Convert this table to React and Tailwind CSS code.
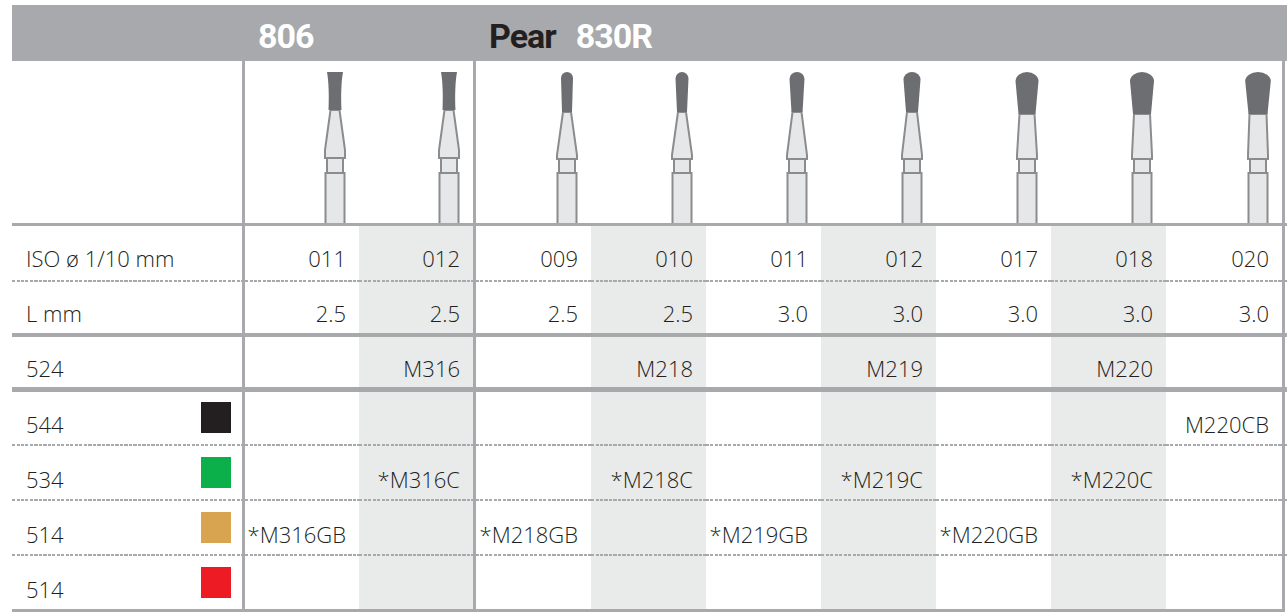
import React from "react";

const cols = [
  { w: "w-[117px]", vline: true, shade: false, bur: { t: "ic" }, iso: "011", l: "2.5", r514: "*M316GB" },
  { w: "w-[114px]", shade: true, bur: { t: "ic" }, iso: "012", l: "2.5", r524: "M316", r534: "*M316C" },
  { w: "w-[118px]", vline: true, bur: { t: "p", w: 6, ry: 6, b: 5, bot: 51 }, iso: "009", l: "2.5", r514: "*M218GB" },
  { w: "w-[115px]", shade: true, bur: { t: "p", w: 6.5, ry: 6.5, b: 5, bot: 51 }, iso: "010", l: "2.5", r524: "M218", r534: "*M218C" },
  { w: "w-[115px]", bur: { t: "p", w: 7.5, ry: 7, b: 5.5, bot: 51 }, iso: "011", l: "3.0", r514: "*M219GB" },
  { w: "w-[115px]", shade: true, bur: { t: "p", w: 8.5, ry: 7.5, b: 6, bot: 51 }, iso: "012", l: "3.0", r524: "M219", r534: "*M219C" },
  { w: "w-[115px]", bur: { t: "p", w: 11.5, ry: 9, b: 8.5, bot: 53 }, iso: "017", l: "3.0", r514: "*M220GB" },
  { w: "w-[115px]", shade: true, bur: { t: "p", w: 12, ry: 9, b: 9, bot: 53 }, iso: "018", l: "3.0", r524: "M220", r534: "*M220C" },
  { w: "w-[116px]", bur: { t: "p", w: 12.8, ry: 9, b: 9.5, bot: 53 }, iso: "020", l: "3.0", r544: "M220CB" },
  { w: "w-[118px]", vline: true, overflow: true, r514: "*M221GB" },
];

const rows = [
  { key: "img", h: "h-[162px]" },
  { sep: "solid", h: "h-[3px]" },
  { key: "iso", h: "h-[54px]", pb: "pb-[11px]", label: "ISO ø 1/10 mm" },
  { sep: "dash", h: "h-[2px]" },
  { key: "l", h: "h-[51px]", pb: "pb-[9px]", label: "L mm" },
  { sep: "solid", h: "h-[4px]" },
  { key: "r524", h: "h-[50px]", pb: "pb-[8px]", label: "524" },
  { sep: "solid", h: "h-[5px]" },
  { key: "r544", h: "h-[52px]", pb: "pb-[9px]", label: "544", sq: "bg-[#231f20]" },
  { sep: "dash", h: "h-[2px]" },
  { key: "r534", h: "h-[53px]", pb: "pb-[9px]", label: "534", sq: "bg-[#0bb04b]" },
  { sep: "dash", h: "h-[2px]" },
  { key: "r514", h: "h-[53px]", pb: "pb-[9px]", label: "514", sq: "bg-[#d9a44f]" },
  { sep: "dash", h: "h-[2px]" },
  { key: "r514r", h: "h-[53px]", pb: "pb-[9px]", label: "514", sq: "bg-[#ed1c24]" },
];

function Bur({ b }) {
  const cx = 20;
  const stroke = "#8b8c8e";
  const fill = "#e6e7e8";
  const headFill = "#6d6e71";
  const isIC = b.t === "ic";
  const hb = isIC ? 49 : b.bot;
  const nt = isIC ? 4.5 : b.b - 1;
  const wide = isIC ? 89 : 94;
  const ringTop = isIC ? 97 : 98;
  let head;
  if (isIC) {
    head = `M${cx - 8},11 L${cx + 8},11 C${cx + 6.3},20 ${cx + 5.8},35 ${cx + 6.5},${hb} L${cx - 6.5},${hb} C${cx - 5.8},35 ${cx - 6.3},20 ${cx - 8},11 Z`;
  } else {
    const top = 11 + b.ry;
    head = `M${cx - b.b},${hb} L${cx - b.w},${top} A${b.w} ${b.ry} 0 0 1 ${cx + b.w},${top} L${cx + b.b},${hb} Z`;
  }
  return (
    <svg width="40" height="162" viewBox="0 0 40 162" className="block">
      <rect x={cx - 9.5} y={112} width={19} height={60} fill={fill} stroke={stroke} strokeWidth="2" />
      <rect x={cx - 8} y={ringTop} width={16} height={112 - ringTop} fill={fill} stroke={stroke} strokeWidth="2" />
      <path
        d={`M${cx - nt},${hb} L${cx + nt},${hb} L${cx + 10},${wide} L${cx + 10},${ringTop} L${cx - 10},${ringTop} L${cx - 10},${wide} Z`}
        fill={fill}
        stroke={stroke}
        strokeWidth="2"
        strokeLinejoin="miter"
      />
      <path d={head} fill={headFill} />
    </svg>
  );
}

const DASH = "bg-[image:repeating-linear-gradient(90deg,#a7a9ac_0px,#a7a9ac_3px,transparent_3px,transparent_4.5px)]";

function Row({ r }) {
  if (r.sep === "solid") {
    return <div className={`${r.h} w-[1400px] bg-[#a7a9ac] shrink-0`} />;
  }
  const isDash = r.sep === "dash";
  return (
    <div className={`flex ${r.h} shrink-0`}>
      <div
        className={`w-[230px] shrink-0 ${isDash ? DASH : ""} ${
          !isDash && r.label ? `flex items-end justify-between pl-[14px] pr-[11px] ${r.pb}` : ""
        }`}
      >
        {!isDash && r.label && (
          <>
            <span className="leading-[21px]">{r.label}</span>
            {r.sq && <span className={`w-[30px] h-[31px] mb-[2px] ${r.sq}`} />}
          </>
        )}
      </div>
      {cols.map((c, i) => {
        const shade = c.shade && r.key !== "img" ? "bg-[#e9eaea]" : "bg-white";
        const vl = c.vline ? "border-l-[3px] border-[#a7a9ac]" : "";
        let inner = null;
        let layout = "";
        if (isDash) {
          layout = DASH;
        } else if (r.key === "img") {
          layout = "flex items-end justify-end pr-[4px]";
          inner = c.bur ? <Bur b={c.bur} /> : null;
        } else {
          const v = c[r.key];
          layout = c.overflow
            ? `flex items-end justify-start pl-[1px] ${r.pb}`
            : `flex items-end justify-end pr-[13px] ${r.pb}`;
          inner = v ? <span className="leading-[21px] whitespace-nowrap">{v}</span> : null;
        }
        return (
          <div key={i} className={`${c.w} shrink-0 ${vl} ${shade} ${layout}`}>
            {inner}
          </div>
        );
      })}
    </div>
  );
}

export default function App() {
  return (
    <div className="w-[1287px] h-[616px] overflow-hidden bg-white pt-[5px] pl-[12px] font-['Open_Sans',sans-serif] font-light text-[22px] text-[#231f20]">
      <div className="h-[56px] w-[1400px] bg-[#a7a9ac] flex items-end pb-[8px] font-['Roboto',sans-serif] font-bold text-[34px] leading-[34px] tracking-[-1px]">
        <div className="w-[230px] shrink-0" />
        <div className="w-[231px] shrink-0 pl-[16px] text-white">806</div>
        <div className="shrink-0 pl-[16px] flex">
          <span className="text-[#231f20]">Pear</span>
          <span className="text-white ml-[20px]">830R</span>
        </div>
      </div>
      {rows.map((r, i) => (
        <Row key={i} r={r} />
      ))}
      <div className="h-[3px] w-[1273px] bg-[#a7a9ac]" />
    </div>
  );
}
